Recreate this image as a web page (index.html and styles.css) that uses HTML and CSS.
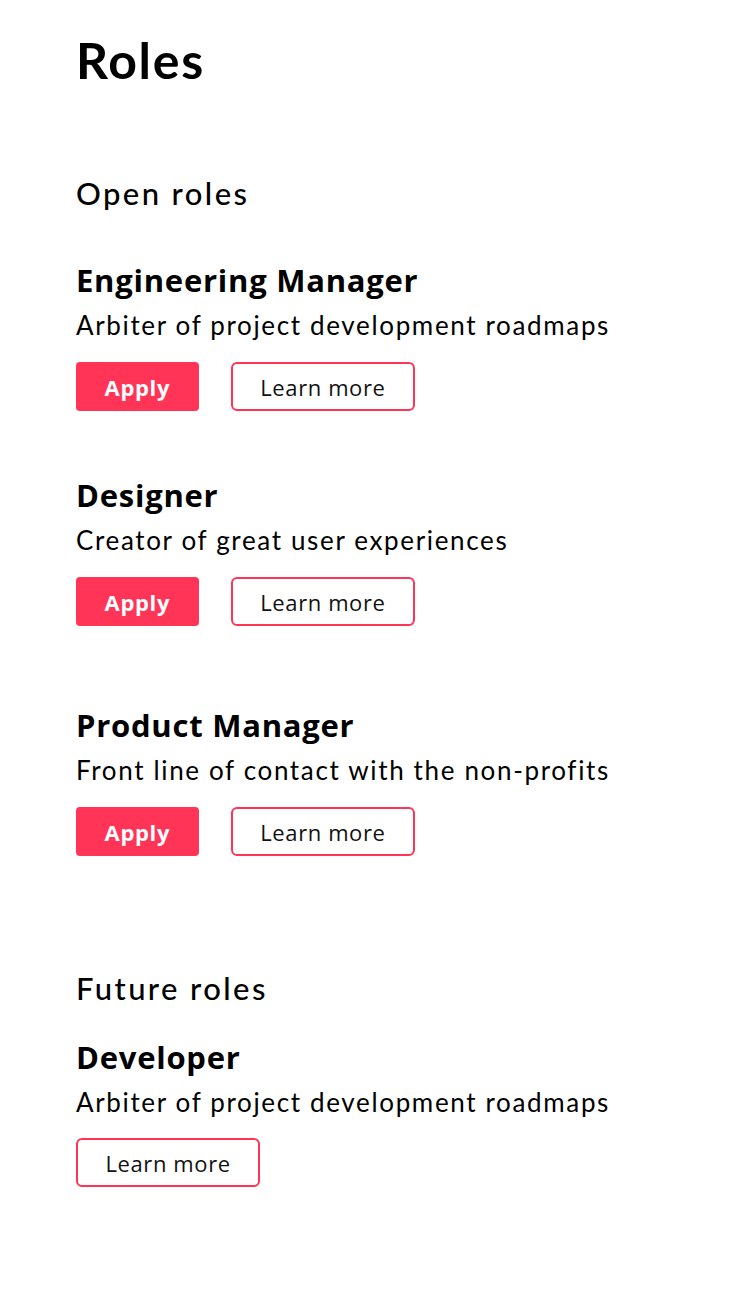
FILE: index.html
```html
<!DOCTYPE html>
<html lang="en">
<head>
<meta charset="utf-8">
<title>Roles</title>
<link rel="stylesheet" href="styles.css">
</head>
<body>
<main class="page">
  <h1 class="page-title">Roles</h1>

  <section class="group group--open">
    <h2 class="group-title">Open roles</h2>
    <div class="role">
      <h3 class="role-title">Engineering Manager</h3>
      <p class="role-desc">Arbiter of project development roadmaps</p>
      <div class="actions">
        <a class="btn btn-primary" href="#">Apply</a>
        <a class="btn btn-outline" href="#">Learn more</a>
      </div>
    </div>
    <div class="role">
      <h3 class="role-title">Designer</h3>
      <p class="role-desc">Creator of great user experiences</p>
      <div class="actions">
        <a class="btn btn-primary" href="#">Apply</a>
        <a class="btn btn-outline" href="#">Learn more</a>
      </div>
    </div>
    <div class="role role--spaced">
      <h3 class="role-title">Product Manager</h3>
      <p class="role-desc">Front line of contact with the non-profits</p>
      <div class="actions">
        <a class="btn btn-primary" href="#">Apply</a>
        <a class="btn btn-outline" href="#">Learn more</a>
      </div>
    </div>
  </section>

  <section class="group group--future">
    <h2 class="group-title">Future roles</h2>
    <div class="role role--first">
      <h3 class="role-title">Developer</h3>
      <p class="role-desc">Arbiter of project development roadmaps</p>
      <div class="actions">
        <a class="btn btn-outline" href="#">Learn more</a>
      </div>
    </div>
  </section>
</main>
</body>
</html>
```

FILE: styles.css
```css
* { box-sizing: border-box; }

html, body {
  margin: 0;
  padding: 0;
  background: #ffffff;
  color: #000000;
}

.page {
  padding: 30px 0 80px 76px;
  font-family: "Lato", "Noto Sans", sans-serif;
}

.page-title {
  margin: 0;
  font-family: "Lato", sans-serif;
  font-weight: 700;
  font-size: 50px;
  line-height: 60px;
  letter-spacing: 1.7px;
}

.group--open { margin-top: 85px; }
.group--future { margin-top: 114px; }

.group-title {
  margin: 0;
  font-family: "Lato", sans-serif;
  font-weight: 500;
  font-size: 31px;
  line-height: 36px;
  letter-spacing: 2.4px;
}

.role { margin-top: 51px; }
.role + .role { margin-top: 66px; }
.role + .role--spaced { margin-top: 81px; }
.role--first { margin-top: 33px; }

.role-title {
  margin: 0;
  font-family: "Open Sans", sans-serif;
  font-weight: 700;
  font-size: 31px;
  line-height: 36px;
  letter-spacing: 0.75px;
}

.role-desc {
  margin: 12px 0 0;
  font-family: "Lato", sans-serif;
  font-weight: 400;
  font-size: 26px;
  line-height: 30px;
  letter-spacing: 1.65px;
}

.actions {
  display: flex;
  gap: 32px;
  margin-top: 22px;
}

.role--first .actions { margin-top: 21px; }

.btn {
  display: inline-flex;
  align-items: center;
  justify-content: center;
  height: 49px;
  font-family: "Open Sans", sans-serif;
  font-size: 22px;
  text-decoration: none;
}

.btn-primary {
  padding: 0 28.5px;
  background: #ff3457;
  color: #ffffff;
  font-weight: 700;
  letter-spacing: 0.7px;
  border-radius: 4px;
}

.btn-outline {
  padding: 0 27.5px;
  border: 2px solid #ff3457;
  border-radius: 6px;
  color: #111111;
  font-weight: 400;
  letter-spacing: 0.6px;
}
```
